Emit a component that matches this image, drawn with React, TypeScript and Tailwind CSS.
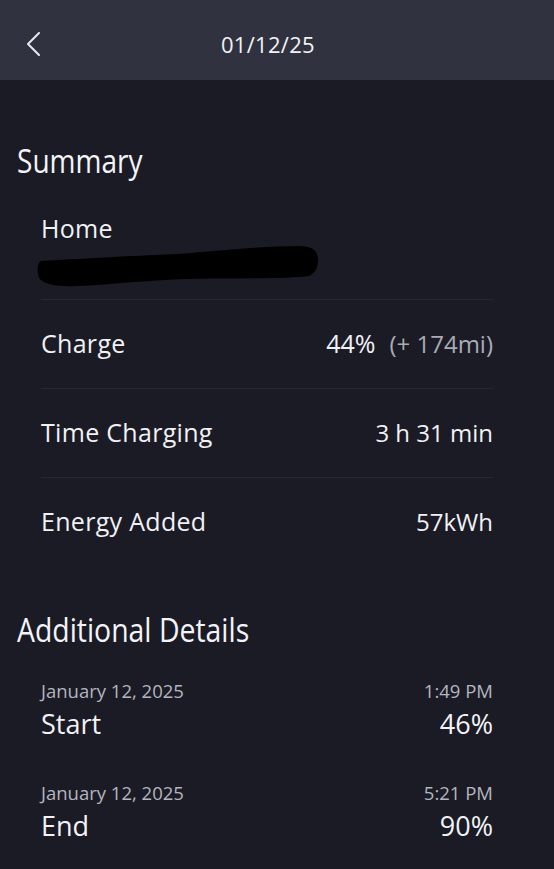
const font = { fontFamily: '"Open Sans", "Noto Sans", sans-serif' }

function Row({ label, children }: { label: string; children: React.ReactNode }) {
  return (
    <div className="flex items-center justify-between h-[89px] border-t border-[#262733]">
      <span className="text-[25px] text-[#f1f1f5] tracking-[0.3px]">{label}</span>
      <span className="text-[24px] text-[#f1f1f5]">{children}</span>
    </div>
  )
}

function Detail({ date, time, label, value }: { date: string; time: string; label: string; value: string }) {
  return (
    <div className="flex flex-col">
      <div className="flex justify-between text-[18.5px] text-[#b3b5bf] leading-[24px]">
        <span>{date}</span>
        <span>{time}</span>
      </div>
      <div className="flex justify-between text-[27px] text-[#f3f3f7] leading-[32px] mt-[5px]">
        <span>{label}</span>
        <span>{value}</span>
      </div>
    </div>
  )
}

export default function App() {
  return (
    <div className="w-[554px] h-[869px] bg-[#1a1b25] overflow-hidden" style={font}>
      <header className="h-[80px] bg-[#313240] flex items-center pt-[8px] relative">
        <button className="absolute left-[26px] top-[32px]">
          <svg width="16" height="24" viewBox="0 0 16 24" fill="none" stroke="#e8e8ee" strokeWidth="2" strokeLinecap="round" strokeLinejoin="round">
            <polyline points="13,1 2,12 13,23" />
          </svg>
        </button>
        <h1 className="w-full text-center text-[22px] text-[#f2f2f6] tracking-[0.3px] pr-[18px]">01/12/25</h1>
      </header>

      <section className="pt-[59px] px-[17px]">
        <h2 className="text-[33px] leading-[44px] text-[#f4f4f8] scale-x-[0.85] origin-left">Summary</h2>
        <div className="pl-[24px] pr-[44px]">
          <div className="h-[116px] pt-[30px]">
            <div className="text-[25px] text-[#f1f1f5] leading-[30px] tracking-[0.3px]">Home</div>
            <svg width="282" height="42" viewBox="0 0 282 42" className="-ml-[4px] mt-[2px] block">
              <path
                d="M4 16 C40 14 90 11 140 9 C190 5 230 1 262 1 C276 1 281 6 281 15 C281 23 278 28 272 31 C250 34 200 33 150 34 C110 35 70 40 40 41 C20 42 6 39 2 33 C0 27 0 18 4 16 Z"
                fill="#000"
              />
            </svg>
          </div>
          <Row label="Charge">
            <span className="text-[25px]">44%</span>
            <span className="text-[#a9abb6] ml-[14px]">(+ 174mi)</span>
          </Row>
          <Row label="Time Charging">3 h 31 min</Row>
          <Row label="Energy Added">57kWh</Row>
        </div>
      </section>

      <section className="pt-[42px] px-[17px]">
        <h2 className="text-[33px] leading-[44px] text-[#f4f4f8] scale-x-[0.86] origin-left whitespace-nowrap">Additional Details</h2>
        <div className="pl-[24px] pr-[44px] mt-[27px] flex flex-col gap-[41px]">
          <Detail date="January 12, 2025" time="1:49 PM" label="Start" value="46%" />
          <Detail date="January 12, 2025" time="5:21 PM" label="End" value="90%" />
        </div>
      </section>
    </div>
  )
}
